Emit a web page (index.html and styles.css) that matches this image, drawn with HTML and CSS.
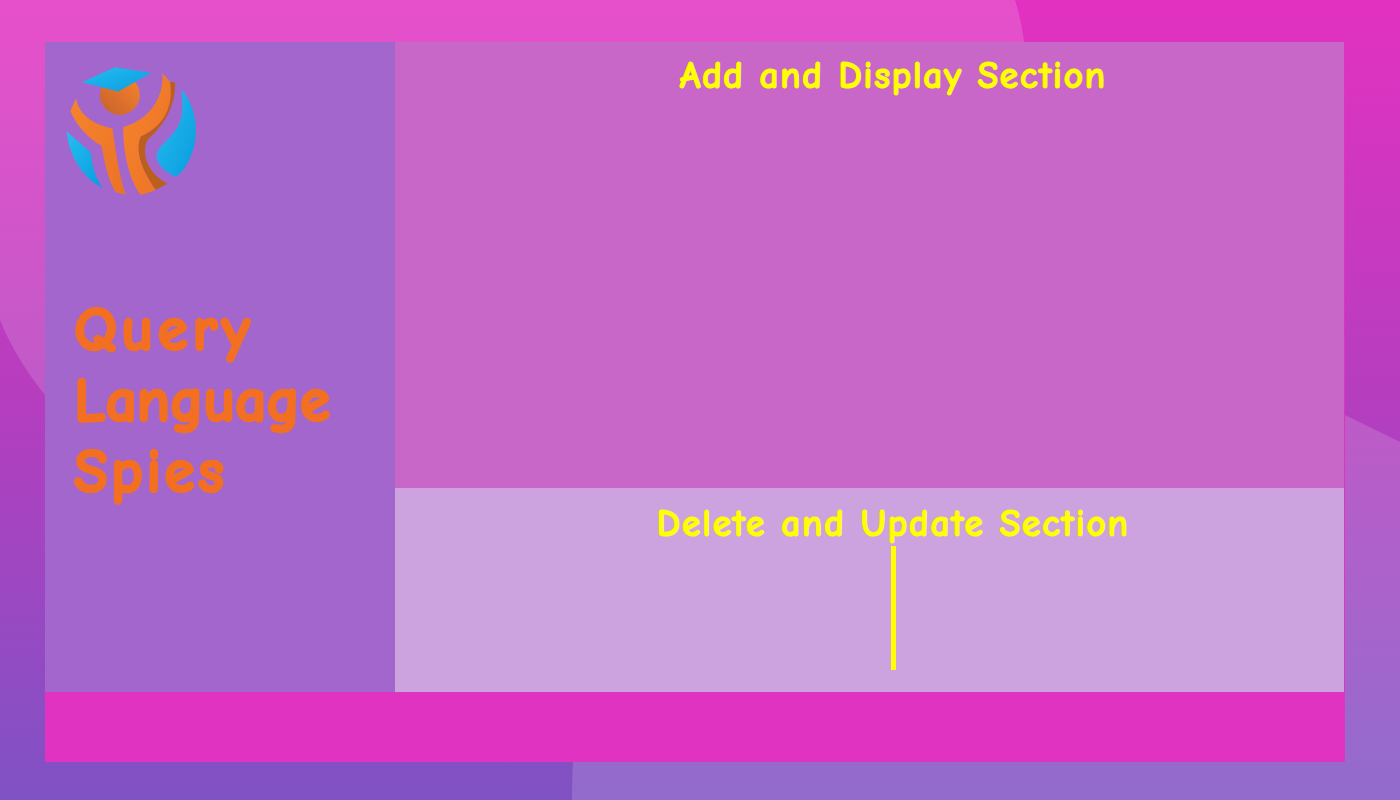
FILE: index.html
```html
<!DOCTYPE html>
<html lang="en">
<head>
<meta charset="utf-8">
<title>Query Language Spies</title>
<link rel="stylesheet" href="styles.css">
</head>
<body>
<svg class="wallpaper" viewBox="0 0 1400 800" preserveAspectRatio="none" aria-hidden="true">
  <defs>
    <linearGradient id="wall" x1="0" y1="0" x2="0" y2="1">
      <stop offset="0" stop-color="#e331c1"/>
      <stop offset="0.5" stop-color="#b53ebf"/>
      <stop offset="1" stop-color="#7f52c4"/>
    </linearGradient>
  </defs>
  <rect width="1400" height="800" fill="url(#wall)"/>
  <path class="blob" d="M0 0H1015C1040 80 1030 200 900 300C700 480 200 520 100 470C75 450 60 420 45 395C25 370 10 345 0 320Z"/>
  <path class="blob" d="M1400 442L1345 415C1200 300 800 400 650 560C590 630 572 700 572 800H1400Z"/>
</svg>
<main class="shell">
  <div class="content">
    <aside class="sidebar">
      <svg class="logo" viewBox="60 75 410 400" aria-label="Query Language Spies logo" role="img">
        <defs>
          <linearGradient id="orange" x1="0" y1="0" x2="1" y2="1">
            <stop offset="0" stop-color="#f5842c"/>
            <stop offset="1" stop-color="#ec7226"/>
          </linearGradient>
          <linearGradient id="head" x1="1" y1="0" x2="0" y2="1">
            <stop offset="0" stop-color="#f7852a"/>
            <stop offset="1" stop-color="#c6602e"/>
          </linearGradient>
          <linearGradient id="blue" x1="0" y1="0" x2="1" y2="1">
            <stop offset="0" stop-color="#25bdf0"/>
            <stop offset="1" stop-color="#0a9cdf"/>
          </linearGradient>
        </defs>
        <circle cx="227" cy="165" r="60" fill="url(#head)"/>
        <path d="M113 127L212 82L322 98L222 155Z" fill="url(#blue)"/>
        <path d="M96 175C100 215 140 255 205 265C212 320 225 410 245 465L215 458C190 420 180 360 172 318C140 300 100 265 78 213Z" fill="url(#orange)"/>
        <path d="M355 100L378 125C392 215 345 265 290 290C270 340 300 400 335 450C320 458 305 462 288 465C250 410 237 330 237 262C315 240 360 175 355 100Z" fill="url(#orange)"/>
        <path d="M378 125L393 128C395 210 350 265 310 300C290 340 310 400 370 432L335 450C300 400 270 340 290 290C345 265 392 215 378 125Z" fill="#bc5f1d"/>
        <path d="M412 148C450 190 465 260 450 320C440 360 420 395 395 412C370 400 335 375 338 345C342 315 395 290 410 240C418 210 415 175 412 148Z" fill="url(#blue)"/>
        <path d="M67 275L140 338C143 380 155 415 175 445C125 420 75 360 67 275Z" fill="url(#blue)"/>
      </svg>
      <h1 class="brand">
        <span class="brand-line brand-line-query">Query</span>
        <span class="brand-line brand-line-language">Language</span>
        <span class="brand-line brand-line-spies">Spies</span>
      </h1>
    </aside>
    <div class="sections">
      <section class="panel panel-add">
        <h2 class="panel-title">Add and Display Section</h2>
      </section>
      <section class="panel panel-edit">
        <h2 class="panel-title panel-title-low">Delete and Update Section</h2>
        <div class="divider"></div>
      </section>
    </div>
  </div>
  <footer class="footer"></footer>
</main>
</body>
</html>
```
FILE: styles.css
```css
html, body {
  margin: 0;
  height: 100%;
  overflow: hidden;
}
body {
  font-family: "Comic Sans MS", "Comic Neue", "Lato", "Liberation Sans", sans-serif;
  font-weight: 700;
}
.wallpaper {
  position: absolute;
  inset: 0;
  width: 1400px;
  height: 800px;
  z-index: -1;
}
.blob {
  fill: #fff;
  fill-opacity: 0.15;
}
.shell {
  width: 1300px;
  height: 720px;
  margin: 42px 0 0 45px;
  display: flex;
  flex-direction: column;
  background: #e033c1;
  position: absolute;
}
.content {
  display: flex;
  height: 650px;
}
.sidebar {
  width: 350px;
  background: #a366cc;
  padding: 23px 0 0 19px;
  box-sizing: border-box;
}
.logo {
  display: block;
  width: 137px;
  height: 133px;
}
.brand {
  margin: 97px 0 0 10px;
  font-size: 62px;
  line-height: 71px;
  color: #f36f21;
  font-weight: 700;
  -webkit-text-stroke: 2.5px #f36f21;
}
.brand-line {
  display: block;
}
.brand-line-query {
  letter-spacing: 4.2px;
}
.brand-line-language {
  letter-spacing: -0.4px;
}
.brand-line-spies {
  letter-spacing: 3px;
}
.sections {
  width: 949px;
  display: flex;
  flex-direction: column;
}
.panel {
  display: flex;
  flex-direction: column;
  align-items: center;
  padding-left: 47px;
  box-sizing: border-box;
}
.panel-add {
  height: 446px;
  background: #c867c8;
}
.panel-edit {
  height: 204px;
  background: #cca3de;
}
.panel-title {
  margin: 12px 0 0;
  font-size: 38px;
  line-height: 44px;
  color: #ffff00;
  font-weight: 700;
  letter-spacing: 1.4px;
  white-space: nowrap;
  -webkit-text-stroke: 1px #ffff00;
}
.panel-title-low {
  margin-top: 14px;
  letter-spacing: 1.55px;
}
.divider {
  width: 5px;
  height: 124px;
  background: #ffff00;
}
.footer {
  height: 70px;
  background: #e033c1;
}
```
